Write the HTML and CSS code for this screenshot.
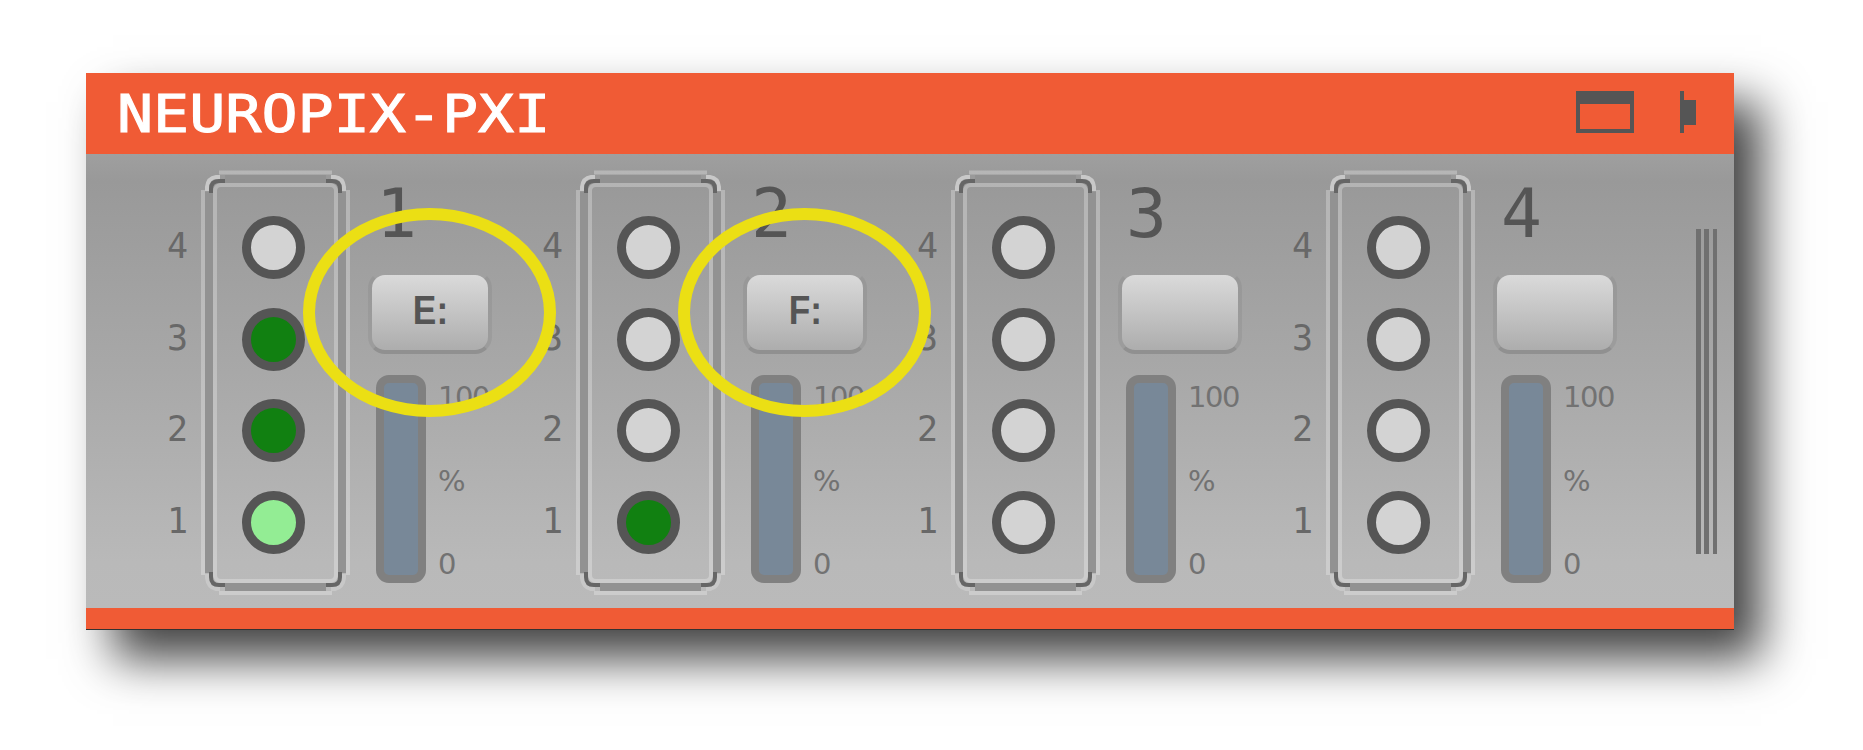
FILE: index.html
```html
<!DOCTYPE html>
<html lang="en">
<head>
<meta charset="utf-8">
<title>Neuropix-PXI</title>
<link rel="stylesheet" href="styles.css">
</head>
<body>
<svg width="0" height="0" class="defs">
  <symbol id="frame" viewBox="0 0 150 425">
    <g fill="none">
      <path stroke="#929292" stroke-width="8" d="M8 22V403M141 22V403M24 9H125M24 417H125"/>
      <path stroke="#fff" stroke-opacity=".27" stroke-width="4" d="M2 20V405M147 20V405M18 2.5H131M18 423H131"/>
      <rect x="14" y="15" width="121" height="396" rx="6" stroke="#fff" stroke-opacity=".27" stroke-width="4"/>
      <path stroke="#c8c8c8" stroke-width="4" d="M6 21V17Q7 8 15 7H19M130 7H134Q142 8 143 17V21M6 404V408Q7 417 15 419H19M130 419H134Q142 417 143 408V404"/>
      <path stroke="#666" stroke-width="4" d="M10 23V19Q10 11 18 11H24M125 11H131Q139 11 139 19V23M10 402V407Q10 415 18 415H24M125 415H131Q139 415 139 407V402"/>
    </g>
  </symbol>
</svg>
<main class="editor">
  <header class="titlebar">
    <h1 class="title">NEUROPIX-PXI</h1>
    <svg class="icons" width="120" height="42" viewBox="0 0 120 42" fill="#555">
      <path fill-rule="evenodd" d="M0 0H58V42H0ZM4 13V38H54V13Z"/>
      <path d="M104 0H108V9H120V34H108V42H104Z"/>
    </svg>
  </header>
  <div class="body">
    <section class="slot">
      <div class="ports"><span>4</span><span>3</span><span>2</span><span>1</span></div>
      <div class="probes"><svg class="frame"><use href="#frame"/></svg><i class="led"></i><i class="led on"></i><i class="led on"></i><i class="led selected"></i></div>
      <div class="side">
        <div class="number">1</div>
        <button class="drive"><span>E:</span></button>
        <div class="fifo"><div class="meter"></div><div class="scale"><span>100</span><span class="unit">%</span><span>0</span></div></div>
      </div>
      <div class="ring"></div>
    </section>
    <section class="slot">
      <div class="ports"><span>4</span><span>3</span><span>2</span><span>1</span></div>
      <div class="probes"><svg class="frame"><use href="#frame"/></svg><i class="led"></i><i class="led"></i><i class="led"></i><i class="led on"></i></div>
      <div class="side">
        <div class="number">2</div>
        <button class="drive"><span>F:</span></button>
        <div class="fifo"><div class="meter"></div><div class="scale"><span>100</span><span class="unit">%</span><span>0</span></div></div>
      </div>
      <div class="ring"></div>
    </section>
    <section class="slot">
      <div class="ports"><span>4</span><span>3</span><span>2</span><span>1</span></div>
      <div class="probes"><svg class="frame"><use href="#frame"/></svg><i class="led"></i><i class="led"></i><i class="led"></i><i class="led"></i></div>
      <div class="side">
        <div class="number">3</div>
        <button class="drive"></button>
        <div class="fifo"><div class="meter"></div><div class="scale"><span>100</span><span class="unit">%</span><span>0</span></div></div>
      </div>
    </section>
    <section class="slot">
      <div class="ports"><span>4</span><span>3</span><span>2</span><span>1</span></div>
      <div class="probes"><svg class="frame"><use href="#frame"/></svg><i class="led"></i><i class="led"></i><i class="led"></i><i class="led"></i></div>
      <div class="side">
        <div class="number">4</div>
        <button class="drive"></button>
        <div class="fifo"><div class="meter"></div><div class="scale"><span>100</span><span class="unit">%</span><span>0</span></div></div>
      </div>
    </section>
    <div class="grip"><i></i><i></i><i></i></div>
  </div>
</main>
</body>
</html>
```

FILE: styles.css
```css
* { box-sizing: border-box; }
body {
  margin: 0;
  height: 750px;
  padding: 73px 0 0 86px;
  overflow: hidden;
  background: #fff;
  font-family: "DejaVu Sans Mono", monospace;
}
.defs { position: absolute; }
.editor {
  width: 1648px;
  height: 557px;
  border-bottom: 1px solid #333;
  box-shadow: 27px 29px 45px rgba(0, 0, 0, .74);
}
.titlebar {
  height: 81px;
  padding: 18px 38px 0 31px;
  display: flex;
  justify-content: space-between;
  align-items: flex-start;
  background: #f05b35;
}
.title {
  margin: 3px 0 0;
  font-size: 51px;
  line-height: 42px;
  font-weight: 400;
  color: #fff;
  -webkit-text-stroke: 1px #fff;
  transform: scaleX(1.176);
  transform-origin: 0 0;
}
.body {
  height: 475px;
  padding: 16px 17px 0 80px;
  display: flex;
  background: linear-gradient(#9f9f9f, #999 6%, #a8a8a8 48%, #b9b9b9 90%, #bababa);
  border-bottom: 21px solid #f05b35;
}
.slot {
  position: relative;
  flex: none;
  width: 375px;
  height: 425px;
  display: flex;
}
.ports {
  width: 35px;
  padding-top: 30px;
  display: flex;
  flex-direction: column;
}
.ports span {
  width: 23px;
  height: 91.7px;
  line-height: 92px;
  text-align: center;
  font-size: 35px;
  color: #686868;
}
.probes {
  width: 150px;
  padding: 46px 0 0 41px;
  display: flex;
  flex-direction: column;
  gap: 28.7px;
}
.frame {
  position: absolute;
  left: 35px;
  top: 0;
  width: 150px;
  height: 425px;
}
.led {
  width: 63px;
  height: 63px;
  border: 9px solid #555;
  border-radius: 50%;
  background: #d3d3d3;
}
.on { background: #118011; }
.selected { background: #93ed94; }
.side { width: 150px; padding-left: 17px; }
.number {
  height: 101px;
  padding: 19px 0 0 8px;
  font-size: 68px;
  line-height: 50px;
  color: #555;
}
.drive {
  display: flex;
  width: 124px;
  height: 83px;
  justify-content: center;
  align-items: center;
  padding: 0 0 5px;
  border: 4px solid rgba(120, 120, 120, .2);
  border-top-color: transparent;
  border-bottom-color: #909090;
  border-radius: 17px;
  background: linear-gradient(#dadada, #adadad) padding-box;
  font: bold 41px "Liberation Sans", sans-serif;
  color: #555;
}
.drive span { transform: scaleX(.86); }
.fifo { display: flex; gap: 12px; padding: 21px 0 0 8px; }
.meter {
  flex: none;
  width: 50px;
  height: 208px;
  border: 8px solid #808080;
  border-radius: 13px;
  background: #788898;
}
.scale {
  padding-top: 11px;
  height: 201px;
  display: flex;
  flex-direction: column;
  justify-content: space-between;
  font-family: "DejaVu Sans", sans-serif;
  font-size: 29px;
  line-height: 23px;
  letter-spacing: -1.5px;
  color: #727272;
}
.ring {
  position: absolute;
  z-index: 2;
  left: 137px;
  top: 38px;
  width: 253px;
  height: 209px;
  border: 12px solid #ebdf14;
  border-radius: 50%;
}
.grip {
  display: flex;
  justify-content: space-between;
  width: 21px;
  height: 325px;
  margin: 59px 0 0 auto;
}
.grip i { width: 4.5px; background: #707070; }
```
